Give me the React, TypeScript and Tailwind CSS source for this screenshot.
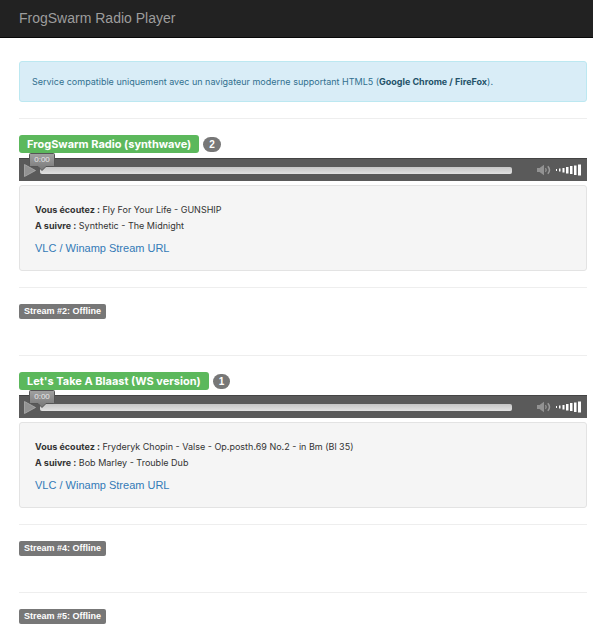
type Stream = {
  id: number
  name?: string
  listeners?: number
  current?: string
  next?: string
}

const streams: Stream[] = [
  {
    id: 1,
    name: 'FrogSwarm Radio (synthwave)',
    listeners: 2,
    current: 'Fly For Your Life - GUNSHIP',
    next: 'Synthetic - The Midnight',
  },
  { id: 2 },
  {
    id: 3,
    name: "Let's Take A Blaast (WS version)",
    listeners: 1,
    current: 'Fryderyk Chopin - Valse - Op.posth.69 No.2 - in Bm (Bl 35)',
    next: 'Bob Marley - Trouble Dub',
  },
  { id: 4 },
  { id: 5 },
]

function Player() {
  return (
    <div className="flex h-[23px] items-center border-t border-[#444] bg-[#5a5a5a] pr-[5px] pl-[5px]">
      <button type="button" aria-label="Lecture" className="w-3 shrink-0">
        <svg viewBox="0 0 12 13" className="block h-[13px] w-3">
          <path d="M.5.5 11.5 6.5.5 12.5Z" fill="#929292" stroke="#adadad" strokeWidth=".8" />
        </svg>
      </button>
      <div className="relative ml-1 h-[7px] flex-1 rounded-[2px] bg-linear-to-b from-[#c6c6c6] to-[#e2e2e2]">
        <div className="absolute -top-[14px] -left-[11px] h-[18px] w-[26px]">
          <svg viewBox="0 0 26 18" className="absolute inset-0 h-[18px] w-[26px]">
            <defs>
              <linearGradient id="bubble" x1="0" y1="0" x2="0" y2="1">
                <stop offset="0" stopColor="#a2a2a2" />
                <stop offset="1" stopColor="#777" />
              </linearGradient>
            </defs>
            <path
              d="M1.5.5H24.5Q25.5.5 25.5 1.5V12.5Q25.5 13.5 24.5 13.5H17L13 17.5 9 13.5H1.5Q.5 13.5.5 12.5V1.5Q.5.5 1.5.5Z"
              fill="url(#bubble)"
              stroke="#555"
            />
          </svg>
          <span className="relative block text-center text-[8px] leading-[14px] text-[#e8e8e8]">0:00</span>
        </div>
      </div>
      <button type="button" aria-label="Muet" className="ml-6 shrink-0">
        <svg viewBox="0 0 16 12" className="block h-3 w-4" fill="none" stroke="#9b9b9b">
          <path d="M1 4h2.5L8 .8v10.4L3.5 8H1Z" fill="#929292" stroke="none" />
          <path d="M9.5 4.2q1.4 1.8 0 3.6" strokeWidth="1.2" />
          <path d="M11.8 2.2q3.4 3.8 0 7.6" strokeWidth="1.5" />
        </svg>
      </button>
      <button type="button" aria-label="Volume" className="ml-[3px] shrink-0">
        <svg viewBox="0 0 27 12" className="block h-3 w-[27px]" fill="#fff">
          <path d="M1 5h1v2H1zM4 4.5h1.5v3H4zM7.5 4h2v4.5h-2zM11 3h2.5v6.5H11zM15 2h2.5v8H15zM19 1.5h2.5V11H19zM23 .5h3v11h-3z" />
        </svg>
      </button>
    </div>
  )
}

function OnlineStream({ stream }: { stream: Stream }) {
  return (
    <section className="border-t border-[#eee] py-4">
      <h2 className="flex items-center gap-1 font-bold text-white">
        <span className="rounded-[3px] bg-[#5cb85c] px-2 font-[Inter,sans-serif] text-[11px] leading-[18px]">
          {stream.name}
        </span>
        <span className="rounded-full bg-[#777] px-[6px] text-[10px] leading-[15px]">
          {stream.listeners}
        </span>
      </h2>
      <div className="mt-[5px]">
        <Player />
      </div>
      <div className="mt-1 rounded-[3px] border border-[#e3e3e3] bg-[#f5f5f5] px-[15px] pt-4 pb-[13px] text-[#333]">
        <p className="font-[Inter,sans-serif] text-[9px] leading-4">
          <strong>Vous écoutez :</strong> {stream.current}
        </p>
        <p className="font-[Inter,sans-serif] text-[9px] leading-4">
          <strong>A suivre :</strong> {stream.next}
        </p>
        <a href="#" className="mt-[6px] block w-fit text-[11px] leading-[17px] text-[#337ab7]">
          VLC / Winamp Stream URL
        </a>
      </div>
    </section>
  )
}

function OfflineStream({ id }: { id: number }) {
  return (
    <section className="border-t border-[#eee] pt-4 pb-9">
      <h2 className="w-fit rounded-[2px] bg-[#777] px-[5px] text-[9px] leading-[15px] font-bold text-white">
        Stream #{id}: Offline
      </h2>
    </section>
  )
}

export default function App() {
  return (
    <div className="h-screen overflow-hidden bg-white font-['Liberation_Sans',Arial,sans-serif]">
      <header className="border-b border-[#080808] bg-[#222] px-[19px]">
        <h1 className="text-[14px] leading-[37px] text-[#9d9d9d]">FrogSwarm Radio Player</h1>
      </header>
      <main className="pt-[23px] pr-[6px] pl-[19px]">
        <div
          role="alert"
          className="mb-4 rounded-[3px] border border-[#bce8f1] bg-[#d9edf7] px-3 py-3 font-[Inter,sans-serif] text-[9px] leading-[15px] text-[#31708f]"
        >
          Service compatible uniquement avec un navigateur moderne supportant HTML5 (
          <strong className="text-[#245269]">Google Chrome / FireFox</strong>).
        </div>
        {streams.map((stream) =>
          stream.name ? (
            <OnlineStream key={stream.id} stream={stream} />
          ) : (
            <OfflineStream key={stream.id} id={stream.id} />
          )
        )}
      </main>
    </div>
  )
}
